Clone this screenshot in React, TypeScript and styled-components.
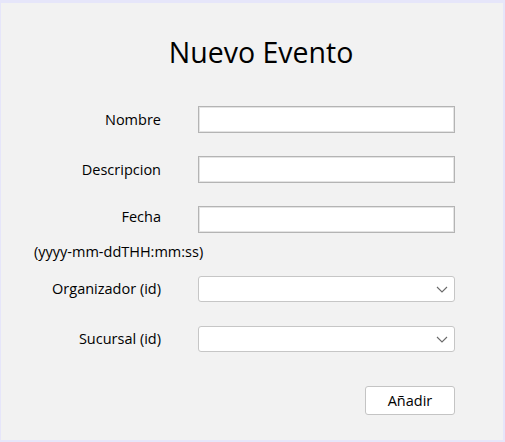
import React from 'react'
import styled, { createGlobalStyle } from 'styled-components'

const GlobalStyle = createGlobalStyle`
    html, body {
        margin: 0;
        padding: 0;
        background: #e6e6fa;
    }
    body {
        font-family: 'Open Sans', 'Noto Sans', sans-serif;
        color: #000000;
    }
`

const Window = styled.div`
    width: 505px;
    height: 442px;
    box-sizing: border-box;
    padding: 3px 2px 2px 1px;
    background: #e6e6fa;
`

const Panel = styled.div`
    height: 100%;
    background: #f2f2f2;
    display: flex;
    flex-direction: column;
`

const Title = styled.h1`
    margin: 30px 0 0;
    font-weight: 400;
    font-size: 28.5px;
    line-height: 38px;
    text-align: center;
    padding-left: 18px;
`

const Form = styled.div`
    display: grid;
    grid-template-columns: 128px 257px;
    column-gap: 37px;
    padding-left: 32px;
    margin-top: 35px;
`

const Label = styled.label<{ $top?: boolean }>`
    font-size: 14.5px;
    text-align: right;
    align-self: ${p => (p.$top ? 'start' : 'center')};
    line-height: 20px;
    margin-top: ${p => (p.$top ? '1px' : '0')};
    white-space: nowrap;
`

const TextInput = styled.input`
    box-sizing: border-box;
    width: 257px;
    height: 27px;
    margin: 0;
    border: 1px solid #b4b4b4;
    box-shadow: inset 0 0 0 1px #e4e4e4;
    background: #ffffff;
    outline: none;
`

const Hint = styled.div`
    grid-column: 1 / -1;
    font-size: 14.5px;
    line-height: 20px;
    margin: 9px 0 14px 1px;
    white-space: nowrap;
`

const SelectBox = styled.div`
    box-sizing: border-box;
    width: 257px;
    height: 26px;
    border: 1px solid #c6c6c6;
    border-radius: 3px;
    background: #ffffff;
    display: flex;
    align-items: center;
    justify-content: flex-end;
    padding-right: 6px;
`

const Spacer = styled.div<{ $h: number }>`
    grid-column: 1 / -1;
    height: ${p => p.$h}px;
`

const Actions = styled.div`
    display: flex;
    justify-content: flex-end;
    width: 454px;
    margin-top: 34px;
`

const Button = styled.button`
    box-sizing: border-box;
    width: 90px;
    height: 29px;
    background: #ffffff;
    border: 1px solid #c4c4c4;
    border-radius: 3px;
    font-family: inherit;
    font-size: 14.5px;
    color: #000000;
    padding: 0;
`

const Chevron = () => (
    <svg width="12" height="7" viewBox="0 0 12 7">
        <path d="M1 1 L6 6 L11 1" fill="none" stroke="#6a6a6a" strokeWidth="1.1" />
    </svg>
)

export default function App() {
    return (
        <>
            <GlobalStyle />
            <Window>
                <Panel>
                    <Title>Nuevo Evento</Title>
                    <Form>
                        <Label>Nombre</Label>
                        <TextInput />
                        <Spacer $h={23} />
                        <Label>Descripcion</Label>
                        <TextInput />
                        <Spacer $h={23} />
                        <Label $top>Fecha</Label>
                        <TextInput />
                        <Hint>(yyyy-mm-ddTHH:mm:ss)</Hint>
                        <Label>Organizador (id)</Label>
                        <SelectBox>
                            <Chevron />
                        </SelectBox>
                        <Spacer $h={24} />
                        <Label>Sucursal (id)</Label>
                        <SelectBox>
                            <Chevron />
                        </SelectBox>
                    </Form>
                    <Actions>
                        <Button>Añadir</Button>
                    </Actions>
                </Panel>
            </Window>
        </>
    )
}
